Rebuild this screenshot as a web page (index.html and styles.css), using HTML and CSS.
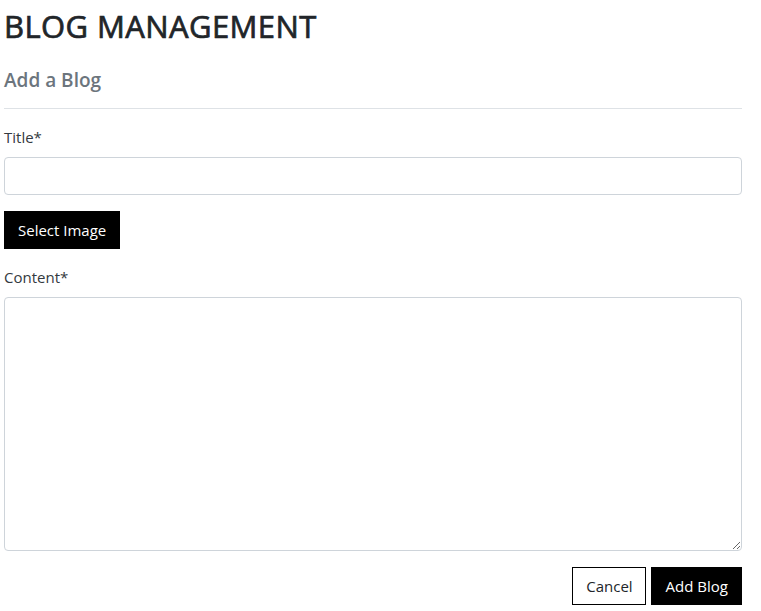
FILE: index.html
```html
<!DOCTYPE html>
<html lang="en">
<head>
<meta charset="utf-8">
<title>Blog Management</title>
<link rel="stylesheet" href="styles.css">
</head>
<body>
<div class="page">
  <h1 class="page-title">BLOG MANAGEMENT</h1>
  <h4 class="section-title">Add a Blog</h4>
  <hr class="divider">
  <form class="blog-form">
    <div class="field">
      <label class="field-label" for="title">Title*</label>
      <input class="field-input" id="title" type="text">
    </div>
    <div class="image-row">
      <button type="button" class="btn btn-dark btn-image">Select Image</button>
    </div>
    <div class="field">
      <label class="field-label" for="content">Content*</label>
      <textarea class="field-textarea" id="content"></textarea>
    </div>
    <div class="actions">
      <button type="button" class="btn btn-outline">Cancel</button>
      <button type="submit" class="btn btn-dark">Add Blog</button>
    </div>
  </form>
</div>
</body>
</html>
```

FILE: styles.css
```css
* { box-sizing: border-box; }
html, body { margin: 0; padding: 0; background: #fff; }
body {
  font-family: "Open Sans", "Noto Sans", "Liberation Sans", sans-serif;
  font-size: 15px;
  color: #212529;
}
.page {
  width: 738px;
  margin-left: 4px;
  padding-top: 4px;
}
.page-title {
  margin: 0;
  font-size: 31px;
  font-weight: 500;
  line-height: 44px;
  color: #212529;
  letter-spacing: 0.4px;
  -webkit-text-stroke: 0.7px #212529;
}
.section-title {
  margin: 19px 0 0;
  font-size: 19px;
  font-weight: 600;
  line-height: 26px;
  color: #6c757d;
}
.divider {
  margin: 15px 0 0;
  border: 0;
  border-top: 1px solid #dee2e6;
}
.blog-form {
  display: flex;
  flex-direction: column;
  padding-top: 16px;
}
.field { display: flex; flex-direction: column; }
.field-label {
  line-height: 24px;
  margin-bottom: 8px;
  color: #343a40;
}
.field-input {
  height: 38px;
  border: 1px solid #ced4da;
  border-radius: 4px;
  font: inherit;
  padding: 6px 12px;
}
.image-row { margin: 16px 0 16px; }
.field-textarea {
  height: 254px;
  border: 1px solid #ced4da;
  border-radius: 4px;
  font: inherit;
  padding: 6px 12px;
  resize: vertical;
}
.btn {
  height: 38px;
  padding: 0 12px;
  font: inherit;
  border-radius: 0;
  cursor: pointer;
}
.btn-dark {
  background: #000;
  color: #fff;
  border: 1px solid #000;
}
.btn-outline {
  background: #fff;
  color: #212529;
  border: 1px solid #000;
}
.btn-image { padding: 0 13px; }
.actions {
  display: flex;
  justify-content: flex-end;
  gap: 5px;
  margin-top: 16px;
}
.actions .btn-dark { padding: 0 13px 0 14px; }
.actions .btn-outline { padding: 0 12px 0 13px; }
```
